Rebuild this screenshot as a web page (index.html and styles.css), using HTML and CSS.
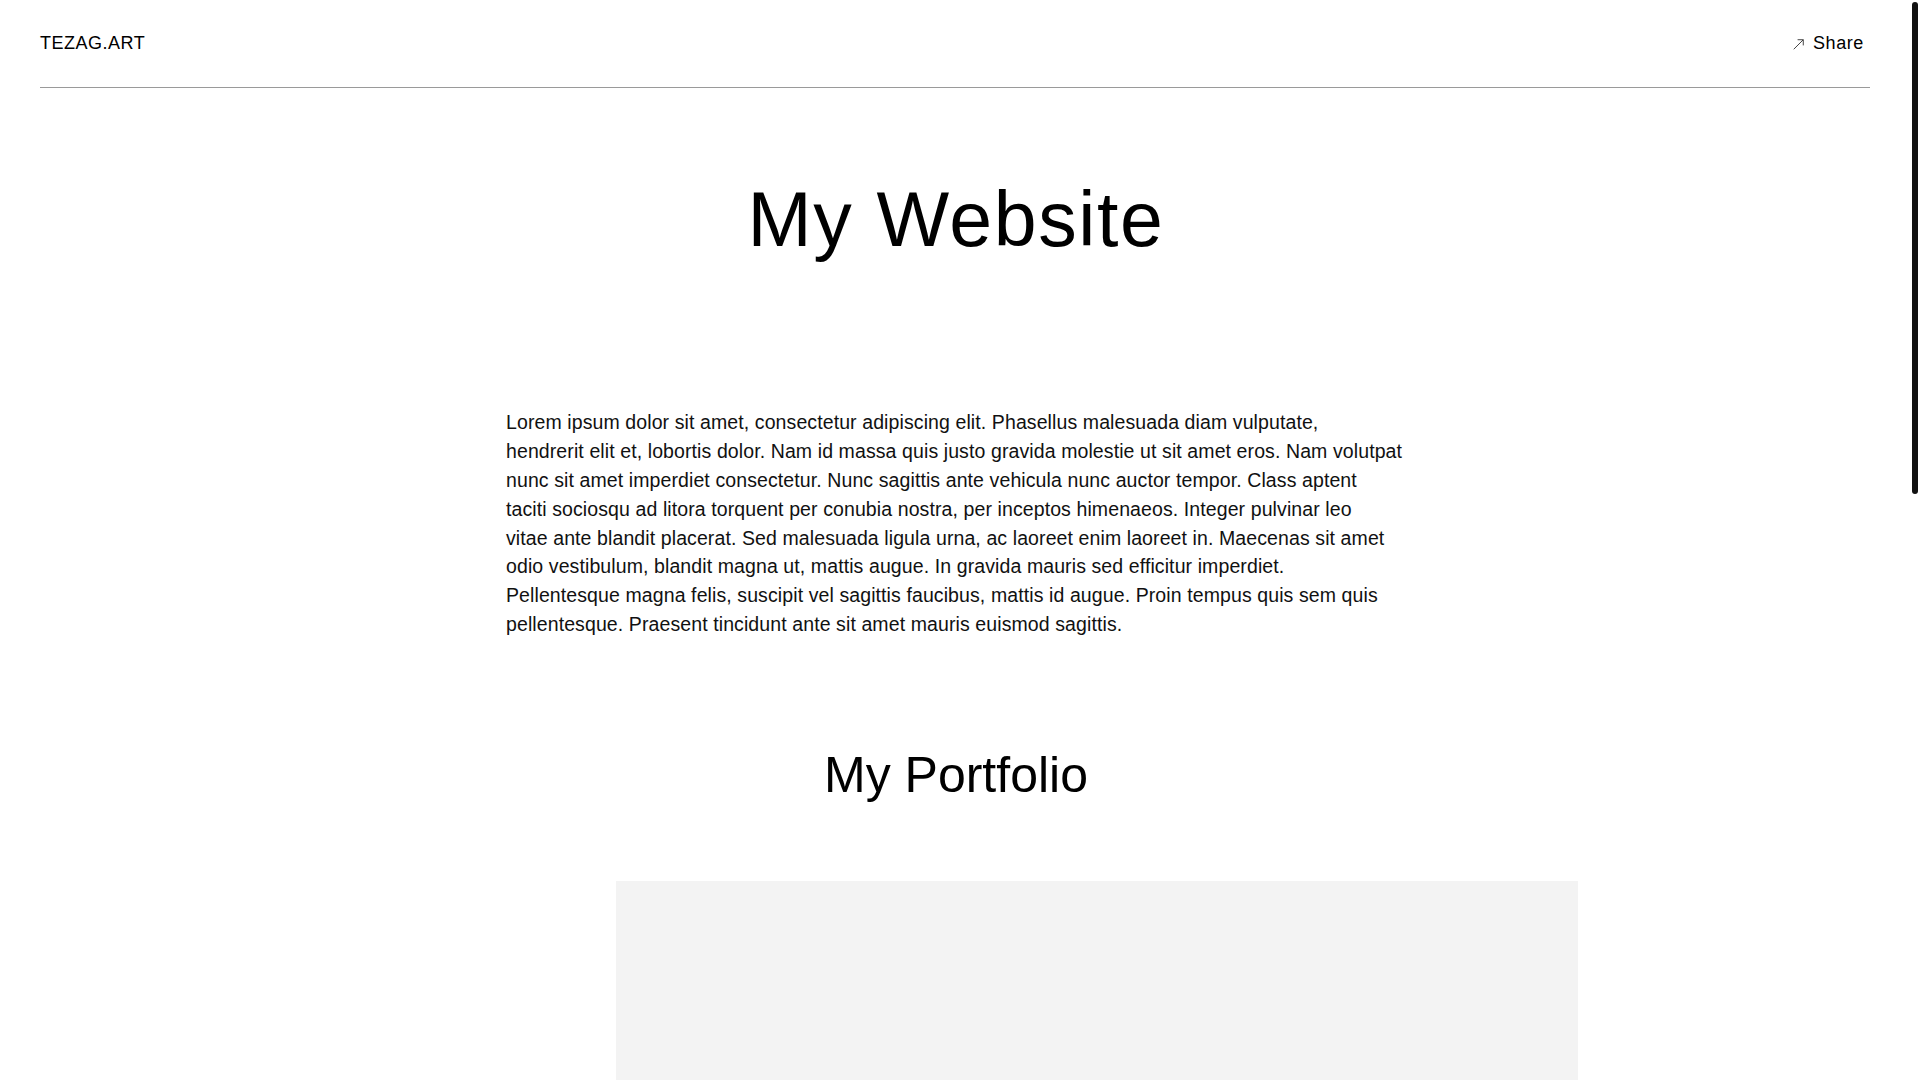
FILE: index.html
```html
<!DOCTYPE html>
<html lang="en">
<head>
<meta charset="utf-8">
<title>My Website</title>
<link rel="stylesheet" href="styles.css">
</head>
<body>
<div class="page">
<header class="site-header">
  <a class="brand" href="#">TEZAG.ART</a>
  <a class="share" href="#">
    <svg class="share-icon" width="12" height="12" viewBox="0 0 12 12" aria-hidden="true">
      <path d="M0.8 11.2 L11.2 0.8 M5 0.8 H11.2 V7" fill="none" stroke="#333" stroke-width="1"/>
    </svg>
    <span>Share</span>
  </a>
</header>
<main class="content">
  <h1 class="title">My Website</h1>
  <p class="intro">Lorem ipsum dolor sit amet, consectetur adipiscing elit. Phasellus malesuada diam vulputate,<br>
hendrerit elit et, lobortis dolor. Nam id massa quis justo gravida molestie ut sit amet eros. Nam volutpat<br>
nunc sit amet imperdiet consectetur. Nunc sagittis ante vehicula nunc auctor tempor. Class aptent<br>
taciti sociosqu ad litora torquent per conubia nostra, per inceptos himenaeos. Integer pulvinar leo<br>
vitae ante blandit placerat. Sed malesuada ligula urna, ac laoreet enim laoreet in. Maecenas sit amet<br>
odio vestibulum, blandit magna ut, mattis augue. In gravida mauris sed efficitur imperdiet.<br>
Pellentesque magna felis, suscipit vel sagittis faucibus, mattis id augue. Proin tempus quis sem quis<br>
pellentesque. Praesent tincidunt ante sit amet mauris euismod sagittis.</p>
  <h2 class="section-title">My Portfolio</h2>
  <section class="portfolio">
    <div class="portfolio-item"></div>
  </section>
</main>
</div>
<div class="scroll-thumb" aria-hidden="true"></div>
</body>
</html>
```
FILE: styles.css
```css
html,
body {
  height: 100%;
  overflow: hidden;
}
body {
  margin: 0;
  font-family: "Liberation Sans", Arial, sans-serif;
  color: #000;
  background: #fff;
}
.page {
  height: 100vh;
  margin-right: 8px;
  overflow: hidden;
}
.scroll-thumb {
  position: fixed;
  top: 2px;
  right: 2px;
  width: 6px;
  height: 492px;
  border-radius: 3px;
  background: #111;
}
a {
  color: inherit;
  text-decoration: none;
}
.site-header {
  display: flex;
  justify-content: space-between;
  align-items: center;
  height: 87px;
  margin: 0 42px 0 40px;
  border-bottom: 1px solid #9a9a9a;
  font-size: 18px;
}
.brand {
  letter-spacing: 0.5px;
}
.share {
  display: flex;
  align-items: center;
  gap: 9px;
  padding-right: 6px;
  letter-spacing: 0.6px;
}
.share-icon {
  display: block;
  width: 11px;
  height: 11px;
  margin-top: 1px;
}
.content {
  text-align: center;
}
.title {
  margin: 85px 0 0;
  font-size: 77px;
  font-weight: 400;
  line-height: 1.2;
  letter-spacing: 1.6px;
}
.intro {
  width: 900px;
  margin: 143px auto 0;
  text-align: left;
  font-size: 19.5px;
  line-height: 28.8px;
  letter-spacing: 0.1px;
  color: #111;
  white-space: nowrap;
}
.section-title {
  margin: 106px 0 0;
  font-size: 50px;
  font-weight: 400;
  line-height: 1.2;
}
.portfolio {
  margin: 76px 0 0 calc(50% - 340px);
  width: 962px;
}
.portfolio-item {
  height: 1490px;
  background: #f3f3f3;
}
```
